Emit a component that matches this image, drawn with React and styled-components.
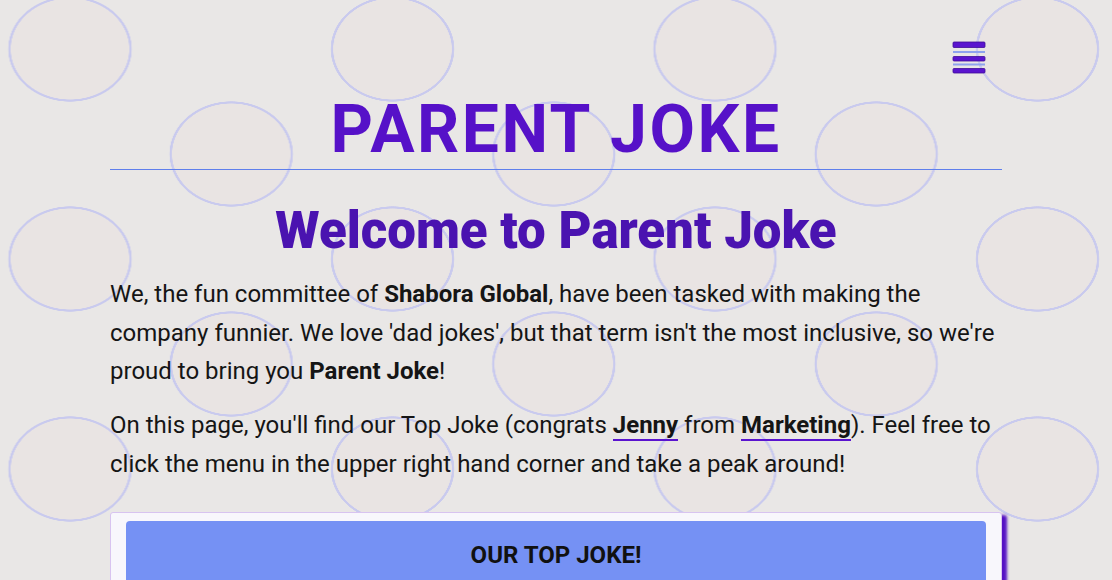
import styled, { createGlobalStyle } from "styled-components";

const GlobalStyle = createGlobalStyle`
  html, body {
    margin: 0;
    padding: 0;
  }

  body {
    font-family: Roboto, "Liberation Sans", sans-serif;
    color: #151515;
    background-color: #e9e7e6;
    background-image:
      radial-gradient(ellipse 61px 52px at 50% 50%, #e9e4e3 calc(100% - 2px), #c9caee calc(100% - 1.5px), #c9caee calc(100% + 0.5px), transparent calc(100% + 1px)),
      radial-gradient(ellipse 61px 52px at 50% 50%, #e9e4e3 calc(100% - 2px), #c9caee calc(100% - 1.5px), #c9caee calc(100% + 0.5px), transparent calc(100% + 1px));
    background-size: 322.5px 210px, 322.5px 210px;
    background-position: -91.25px -56px, 70px 49px;
  }
`;

const MenuIcon = () => (
  <svg width="34" height="34" viewBox="0 0 34 34">
    <rect x="1" y="1" width="32" height="5.5" rx="1" fill="#5a14cf" stroke="#3f0b98" strokeWidth="0.8" />
    <rect x="1" y="10" width="32" height="2" fill="#8ea2ee" />
    <rect x="1" y="15.5" width="32" height="4.5" rx="1" fill="#5a14cf" stroke="#3f0b98" strokeWidth="0.8" />
    <rect x="1" y="22.5" width="32" height="2" fill="#8ea2ee" />
    <rect x="1" y="27.5" width="32" height="4.5" rx="1" fill="#5a14cf" stroke="#3f0b98" strokeWidth="0.8" />
  </svg>
);

const App = () => {
  return (
    <>
      <GlobalStyle />
      <MenuButton aria-label="Open menu">
        <MenuIcon />
      </MenuButton>
      <Page>
        <Title>PARENT JOKE</Title>
        <Rule />
        <Heading>Welcome to Parent Joke</Heading>
        <Text>
          We, the fun committee of <b>Shabora Global</b>, have been tasked with
          making the company funnier. We love 'dad jokes', but that term isn't
          the most inclusive, so we're proud to bring you <b>Parent Joke</b>!
        </Text>
        <Text>
          On this page, you'll find our Top Joke (congrats <Link href="#">Jenny</Link>{" "}
          from <Link href="#">Marketing</Link>). Feel free to click the menu in
          the upper right hand corner and take a peak around!
        </Text>
        <Card>
          <CardHeader>OUR TOP JOKE!</CardHeader>
        </Card>
      </Page>
    </>
  );
};

const MenuButton = styled.button`
  position: fixed;
  top: 41px;
  right: 126px;
  padding: 0;
  border: none;
  background: transparent;
  cursor: pointer;
  line-height: 0;
`;

const Page = styled.main`
  width: 892px;
  margin: 0 auto;
  padding-top: 97px;
`;

const Title = styled.h1`
  margin: 0 0 6px;
  font-size: 66px;
  line-height: 66px;
  font-weight: 700;
  letter-spacing: 2.5px;
  text-align: center;
  color: #5611c8;
`;

const Rule = styled.hr`
  margin: 0;
  height: 1px;
  border: none;
  background: #5f7fec;
`;

const Heading = styled.h2`
  margin: 30px 0 14px;
  font-size: 51px;
  line-height: 1.2;
  font-weight: 900;
  text-align: center;
  color: #4a13b0;
`;

const Text = styled.p`
  margin: 0 0 16px;
  font-size: 24px;
  line-height: 1.6;
`;

const Link = styled.a`
  color: #151515;
  font-weight: 700;
  text-decoration: none;
  border-bottom: 2px solid #5a14cf;
`;

const Card = styled.section`
  margin-top: 29px;
  padding: 8px 15px;
  background: #f8f7fc;
  border: 1px solid #d8c4f0;
  border-radius: 3px;
  box-shadow: 5px 3px 3px #5410c4;
`;

const CardHeader = styled.h3`
  margin: 0;
  padding: 16px;
  background: #7591f4;
  border-radius: 4px;
  font-size: 24px;
  line-height: 1.5;
  font-weight: 700;
  text-align: center;
  color: #111;
`;

export default App;
